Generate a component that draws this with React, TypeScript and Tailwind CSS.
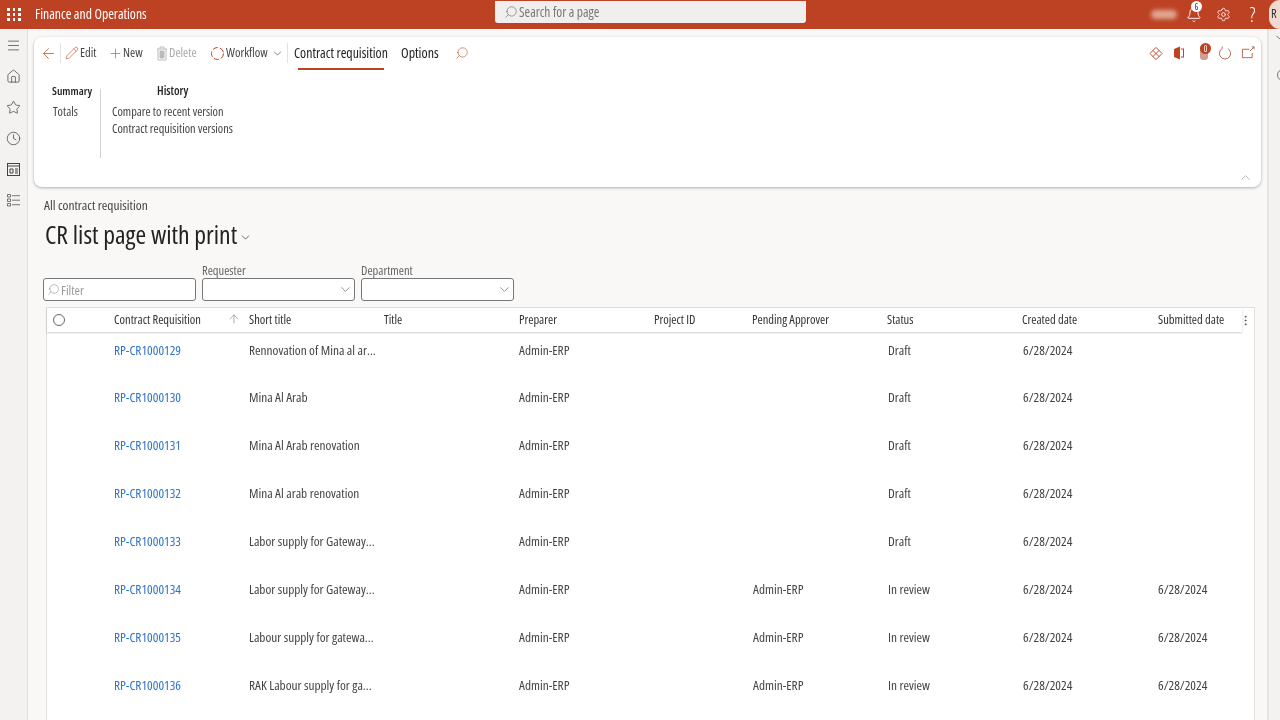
import { ArrowLeft, ArrowUp, ChevronDown, ChevronUp, Clock, EllipsisVertical, House, Menu, Pencil, Plus, Search, Settings, Star, Bell } from "lucide-react";

const ROWS = [
  { id: "RP-CR1000129", title: "Rennovation of Mina al ar...", pending: "", status: "Draft", submitted: "" },
  { id: "RP-CR1000130", title: "Mina Al Arab", pending: "", status: "Draft", submitted: "" },
  { id: "RP-CR1000131", title: "Mina Al Arab renovation", pending: "", status: "Draft", submitted: "" },
  { id: "RP-CR1000132", title: "Mina Al arab renovation", pending: "", status: "Draft", submitted: "" },
  { id: "RP-CR1000133", title: "Labor supply for Gateway...", pending: "", status: "Draft", submitted: "" },
  { id: "RP-CR1000134", title: "Labor supply for Gateway...", pending: "Admin-ERP", status: "In review", submitted: "6/28/2024" },
  { id: "RP-CR1000135", title: "Labour supply for gatewa...", pending: "Admin-ERP", status: "In review", submitted: "6/28/2024" },
  { id: "RP-CR1000136", title: "RAK Labour supply for ga...", pending: "Admin-ERP", status: "In review", submitted: "6/28/2024" },
];

const GRID = "grid grid-cols-[67px_135px_135px_135px_135px_98px_135px_135px_136px_1fr] items-center";

export default function App() {
  return (
    <div className="h-[720px] w-[1280px] overflow-hidden bg-[#f9f8f7] text-[12.5px] text-[#444] font-stretch-condensed whitespace-nowrap flex flex-col blur-[0.3px]" style={{ fontFamily: '"Open Sans", sans-serif' }}>
      <header className="h-[29px] shrink-0 bg-[#bd4224] text-white flex items-center">
        <div className="w-[27px] grid grid-cols-3 gap-[2.5px] pl-[7px] pr-[6px]">
          {Array.from({ length: 9 }).map((_, i) => <span key={i} className="w-[2.5px] h-[2.5px] bg-white" />)}
        </div>
        <span className="ml-[8px] w-[460px] text-[13.7px] font-medium">Finance and Operations</span>
        <div className="w-[311px] h-[22px] mb-[5px] rounded-b-[3px] bg-[#f1efed] flex items-center pl-[9px] text-[#777] text-[13.5px]">
          <Search className="w-[14px] h-[14px] -scale-x-100" strokeWidth={1.2} />
          <span className="ml-[1px]">Search for a page</span>
        </div>
        <div className="ml-auto flex items-center">
          <div className="w-[26px] h-[9px] rounded-full bg-[#e0a68f] blur-[2px] mr-[9px]" />
          <div className="relative mr-[14px]">
            <Bell className="w-[16px] h-[16px]" strokeWidth={1.4} />
            <span className="absolute -top-[6px] left-[5px] w-[11px] h-[11px] rounded-full bg-white text-[#333] text-[9px] leading-[11px] text-center">6</span>
          </div>
          <Settings className="w-[15px] h-[15px] mr-[14px]" strokeWidth={1.3} />
          <span className="w-[15px] mr-[9px] text-[21px] leading-[29px] text-center font-light">?</span>
          <div className="w-[11px] h-[29px] rounded-l-full bg-[#f0d9d0] text-[#333] flex items-center pl-[2px]">R</div>
        </div>
      </header>

      <div className="flex-1 flex min-h-0">
        <nav className="w-[28px] shrink-0 bg-[#f3f2f1] border-r border-[#e0dedc] flex flex-col items-center pt-[9px] gap-[16px] text-[#444]">
          <Menu className="w-[15px] h-[15px]" strokeWidth={1.2} />
          <House className="w-[15px] h-[15px]" strokeWidth={1.2} />
          <Star className="w-[15px] h-[15px]" strokeWidth={1.2} />
          <Clock className="w-[15px] h-[15px]" strokeWidth={1.2} />
          <svg className="w-[15px] h-[15px]" viewBox="0 0 15 15" fill="none" stroke="currentColor"><rect x="1.5" y="1.5" width="12" height="12" /><path d="M1.5 4h12M4 7h3v4H4zM9 7h3M9 9h3M9 11h3" /></svg>
          <svg className="w-[15px] h-[15px]" viewBox="0 0 15 15" fill="none" stroke="currentColor" strokeWidth="0.7"><path d="M1.5 1.5h3v2.5h-3zM1.5 6h3v2.5h-3zM1.5 10.5h3V13h-3zM6 2.7h8M6 7.2h8M6 11.7h8" /></svg>
        </nav>

        <main className="flex-1 min-w-0 flex flex-col pl-[6px]">
          <section className="mt-[8px] w-[1227px] h-[150px] shrink-0 rounded-[8px] bg-white shadow-[0_1px_3px_rgba(0,0,0,0.3)] relative">
            <div className="h-[31px] flex items-center pl-[6px] pt-[1px]">
              <ArrowLeft className="w-[17px] h-[17px] text-[#bd4224]" strokeWidth={1} />
              <div className="w-px h-[20px] bg-[#e5e3e1] ml-[3px]" />
              <Pencil className="ml-[4px] w-[14px] h-[14px] text-[#bd4224]" strokeWidth={1} />
              <span className="ml-[1px] w-[18px]">Edit</span>
              <Plus className="ml-[10px] w-[15px] h-[15px] text-[#bd4224]" strokeWidth={1} />
              <span className="w-[21px]">New</span>
              <svg className="ml-[12px] w-[12px] h-[15px] text-[#bbb]" viewBox="0 0 12 15" fill="none" stroke="currentColor"><path d="M1 3h10M4 3V1h4v2M2 3v11h8V3" /><path d="M4 5h4v7H4z" fill="currentColor" /></svg>
              <span className="ml-[1px] w-[30px] text-[#aaa]">Delete</span>
              <svg className="ml-[11px] w-[15px] h-[15px] text-[#bd4224]" viewBox="0 0 15 15" fill="none" stroke="currentColor" strokeDasharray="5.5 2"><circle cx="7.5" cy="7.5" r="6" /></svg>
              <span className="w-[44px] ml-[1px]">Workflow</span>
              <ChevronDown className="ml-[1px] w-[13px] h-[13px]" strokeWidth={1.2} />
              <div className="w-px h-[20px] bg-[#e5e3e1] ml-[3px]" />
              <div className="relative ml-[6px] w-[95px] h-full flex items-center font-medium text-[13.8px] text-[#222]">
                Contract requisition
                <span className="absolute left-[4px] right-[5px] bottom-[-2px] h-[2px] bg-[#bd4224]" />
              </div>
              <span className="ml-[12px] w-[38px] font-medium text-[14px] leading-[18px] -mt-[1px] text-[#222]">Options</span>
              <Search className="ml-[16px] w-[14px] h-[14px] -mt-[1px] text-[#bd4224] -scale-x-100" strokeWidth={1} />
              <div className="ml-auto mr-[6px] flex items-center text-[#bd4224]">
                <svg className="w-[14px] h-[15px]" viewBox="0 0 15 15" fill="none" stroke="currentColor"><path d="M7.5 1 14 7.5 7.5 14 1 7.5zM4.2 4.2l6.6 6.6M10.8 4.2l-6.6 6.6" /></svg>
                <svg className="w-[12px] h-[14px] ml-[10px]" viewBox="0 0 12 14" fill="currentColor"><path d="M1 3 7 .5v13L1 11zM8 2.5h3v9H8v-1h2v-7H8z" /></svg>
                <div className="relative ml-[15px] w-[8px] h-[14px] rounded-[3px] bg-[#cf9d94]">
                  <span className="absolute -top-[3px] left-[0px] w-[11px] h-[11px] rounded-full bg-[#bd4224] text-white text-[8.5px] leading-[11px] text-center">0</span>
                </div>
                <svg className="w-[14px] h-[15px] ml-[10px] text-[#b5604c]" viewBox="0 0 15 15" fill="none" stroke="currentColor"><path d="M4.5 2.2a6 6 0 1 0 6 0M4.5 2.2V0" /></svg>
                <svg className="w-[14px] h-[14px] ml-[9px] text-[#b5604c]" viewBox="0 0 15 15" fill="none" stroke="currentColor"><path d="M9 3.5H1.5v9h10.5V7.5M9.5 5.5l4.5-4.5M11.5 1H14v2.5" /></svg>
              </div>
            </div>
            <div className="flex pl-[18px] mt-[13px] text-[12.3px]">
              <div className="w-[48px]">
                <div className="font-semibold text-[11.5px] h-[22px] leading-[20px] text-[#222]">Summary</div>
                <div className="pl-[1px]">Totals</div>
              </div>
              <div className="w-px h-[69px] mt-[8px] bg-[#d5d3d1]" />
              <div className="pl-[11px]">
                <div className="font-semibold text-[12px] h-[22px] leading-[20px] pl-[45px] text-[#222]">History</div>
                <div className="h-[17px]">Compare to recent version</div>
                <div>Contract requisition versions</div>
              </div>
            </div>
            <ChevronUp className="absolute right-[8px] bottom-[2px] w-[15px] h-[15px] text-[#999]" strokeWidth={1.1} />
          </section>

          <div className="mt-[10px] pl-[10px] h-[16px] leading-[16px] text-[13.4px]">All contract requisition</div>
          <div className="pl-[11px] mt-[7px] flex items-center text-[#222]">
            <h1 className="text-[25.7px] leading-[30px] font-medium">CR list page with print</h1>
            <ChevronDown className="ml-[2px] w-[13px] h-[13px] mt-[5px]" strokeWidth={1.2} />
          </div>

          <div className="pl-[9px] mt-[13px] flex items-end gap-[6px] text-[#666]">
            <div className="w-[153px] h-[23px] rounded-[3px] border border-[#777] bg-white flex items-center pl-[3px] pt-[2px] text-[#999] text-[13px]">
              <Search className="w-[13px] h-[13px] -scale-x-100 -mt-[2px]" strokeWidth={1.2} />
              <span className="ml-[1px]">Filter</span>
            </div>
            <div className="w-[153px]">
              <div className="h-[15px] leading-[15px]">Requester</div>
              <div className="h-[23px] rounded-[3px] border border-[#777] bg-white flex items-center justify-end pr-[1px]"><ChevronDown className="w-[15px] h-[15px]" strokeWidth={1.1} /></div>
            </div>
            <div className="w-[153px]">
              <div className="h-[15px] leading-[15px]">Department</div>
              <div className="h-[23px] rounded-[3px] border border-[#777] bg-white flex items-center justify-end pr-[1px]"><ChevronDown className="w-[15px] h-[15px]" strokeWidth={1.1} /></div>
            </div>
          </div>

          <div className="ml-[12px] mt-[6px] w-[1209px] flex-1 bg-white border border-[#e1dfdd] border-b-0">
            <div className="relative z-10 w-[1195px] h-[24px] font-medium text-[#333] shadow-[0_1px_2px_rgba(0,0,0,0.2)] bg-white">
              <div className={`${GRID} h-full w-[1207px]`}>
                <span className="ml-[6px] w-[12px] h-[12px] rounded-full border border-[#666]" />
                <span className="flex items-center pr-[8px]">Contract Requisition<ArrowUp className="ml-auto w-[14px] h-[14px] text-[#777] -mt-[2px]" strokeWidth={1} /></span>
                <span>Short title</span>
                <span>Title</span>
                <span>Preparer</span>
                <span>Project ID</span>
                <span>Pending Approver</span>
                <span>Status</span>
                <span>Created date</span>
                <span className="flex items-center">Submitted date<EllipsisVertical className="ml-[15px] w-[13px] h-[13px]" strokeWidth={1.2} /></span>
              </div>
            </div>
            <div className="-mt-[5px] text-[13.3px]">
              {ROWS.map((r) => (
                <div key={r.id} className={`${GRID} h-[48px] first:h-[47px]`}>
                  <span />
                  <span className="text-[#2f74c6]">{r.id}</span>
                  <span>{r.title}</span>
                  <span />
                  <span>Admin-ERP</span>
                  <span />
                  <span className="pl-[1px]">{r.pending}</span>
                  <span className="pl-[1px]">{r.status}</span>
                  <span className="pl-[1px]">6/28/2024</span>
                  <span>{r.submitted}</span>
                </div>
              ))}
            </div>
          </div>
        </main>

        <aside className="w-[13px] shrink-0 bg-[#f3f2f1] border-l-2 border-[#e6e4e2] relative overflow-hidden text-[#666]">
          <ChevronDown className="absolute left-[5px] top-[3px] w-[11px] h-[11px]" strokeWidth={2} />
          <span className="absolute left-[8px] top-[40px] w-[12px] h-[12px] rounded-full border border-[#777]" />
        </aside>
      </div>
    </div>
  );
}
